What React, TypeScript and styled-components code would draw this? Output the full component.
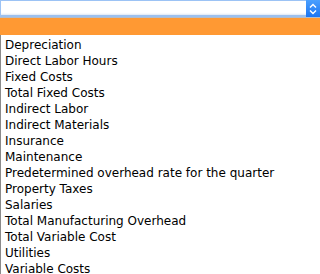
import React from "react";
import styled, { createGlobalStyle } from "styled-components";

const Global = createGlobalStyle`
  html, body { margin: 0; padding: 0; background: #fff; }
  body { font-family: "DejaVu Sans", Verdana, sans-serif; }
`;

const Page = styled.div`
  width: 320px;
  height: 274px;
  overflow: hidden;
  display: flex;
  flex-direction: column;
  & > * { flex-shrink: 0; }
`;

const SelectBox = styled.div`
  height: 14px;
  display: flex;
  border: 1px solid #9cc3f5;
  border-bottom: 2px solid #9cc0ee;
  border-right: none;
  background: #fff;
  box-shadow: inset 0 -2px 2px -1px #dde7f4;
`;

const SelectField = styled.div`
  flex: 1;
`;

const ArrowButton = styled.div`
  width: 14px;
  margin-top: -1px;
  height: 18px;
  background: linear-gradient(#4aa0ff, #1a73f0);
  display: flex;
  align-items: center;
  justify-content: center;
`;

const Shade = styled.div`
  height: 1px;
  background: #b4bcc8;
`;

const Highlight = styled.div`
  height: 17px;
  background: #ff9933;
`;

const List = styled.ul`
  list-style: none;
  margin: 0;
  padding: 2px 0 0 4px;
  border-left: 1px solid #8a8a8a;
`;

const Option = styled.li`
  font-size: 12px;
  line-height: 16px;
  height: 16px;
  color: #000;
  white-space: nowrap;
`;

const items = [
  "Depreciation",
  "Direct Labor Hours",
  "Fixed Costs",
  "Total Fixed Costs",
  "Indirect Labor",
  "Indirect Materials",
  "Insurance",
  "Maintenance",
  "Predetermined overhead rate for the quarter",
  "Property Taxes",
  "Salaries",
  "Total Manufacturing Overhead",
  "Total Variable Cost",
  "Utilities",
  "Variable Costs",
];

export default function App() {
  return (
    <Page>
      <Global />
      <SelectBox>
        <SelectField />
        <ArrowButton>
          <svg width="8" height="12" viewBox="0 0 8 12">
            <path d="M1 4.5 L4 1.5 L7 4.5 M1 7.5 L4 10.5 L7 7.5" fill="none" stroke="#fff" strokeWidth="1.4" />
          </svg>
        </ArrowButton>
      </SelectBox>
      <Shade />
      <Highlight />
      <List>
        {items.map((t) => (
          <Option key={t}>{t}</Option>
        ))}
      </List>
    </Page>
  );
}
